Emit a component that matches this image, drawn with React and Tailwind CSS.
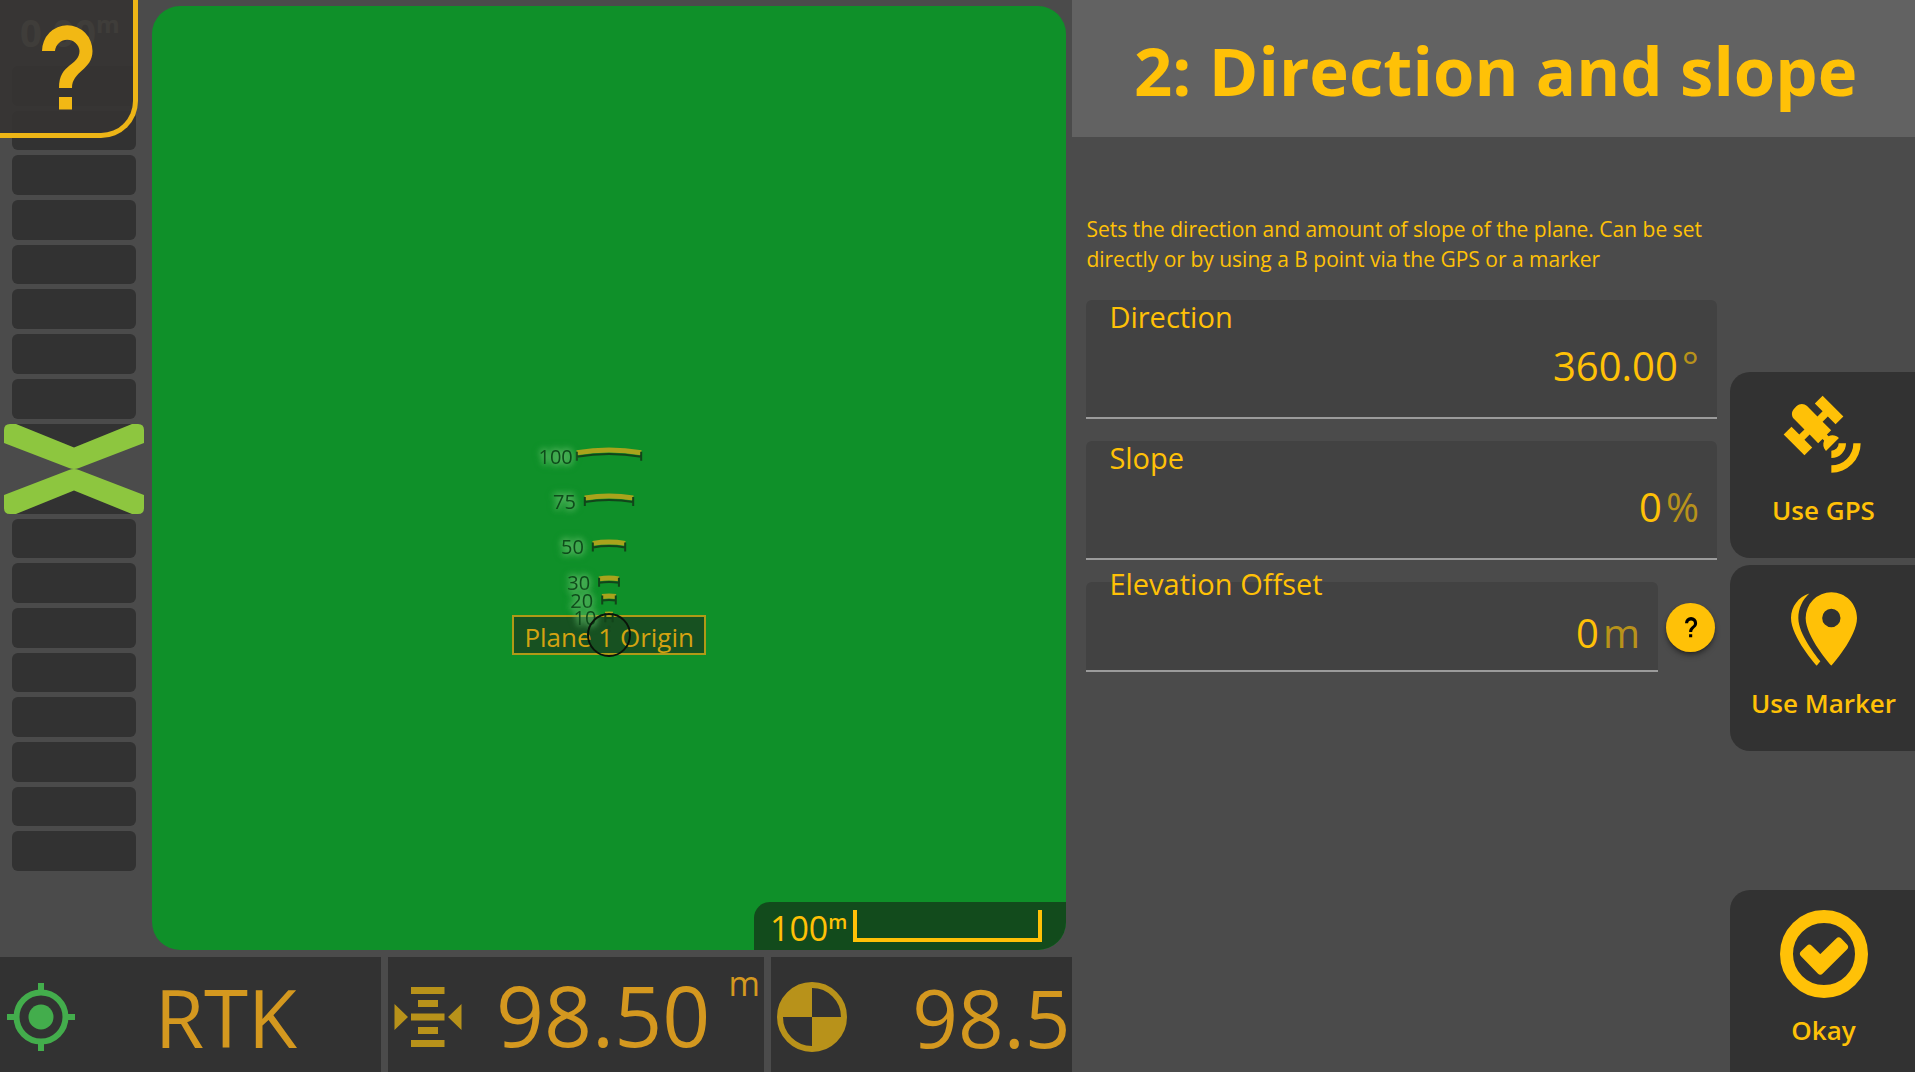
const HELP_PATH =
  "M25 34A25 25.500 0 0 1 75.500 34C75.500 53 55 54 55 71H42C42 46 62.500 49 62.500 34A12.300 12.300 0 0 0 38 34ZM42 80H55V92.500H42Z";

function HelpGlyph({ className }) {
  return (
    <svg viewBox="0 0 100 100" className={className} fill="currentColor" aria-hidden="true">
      <path d={HELP_PATH} />
    </svg>
  );
}

function SatelliteIcon() {
  return (
    <svg viewBox="0 0 24 24" className="size-22" fill="currentColor" aria-hidden="true">
      <path d="M11.62,1L17.28,6.67L15.16,8.79L13.04,6.67L11.62,8.09L13.95,10.41L12.79,11.58L13.24,12.04C14.17,11.61 15.31,11.77 16.07,12.54L12.54,16.07C11.77,15.31 11.61,14.17 12.04,13.24L11.58,12.79L10.41,13.95L8.09,11.62L6.67,13.04L8.79,15.16L6.67,17.28L1,11.62L3.14,9.5L5.26,11.62L6.67,10.21L3.84,7.38C3.06,6.6 3.06,5.33 3.84,4.55L4.55,3.84C5.33,3.06 6.6,3.06 7.38,3.84L10.21,6.67L11.62,5.26L9.5,3.14L11.62,1M18,14A4,4 0 0,1 14,18V16A2,2 0 0,0 16,14H18M22,14A8,8 0 0,1 14,22V20A6,6 0 0,0 20,14H22Z" />
    </svg>
  );
}

function MarkerIcon() {
  return (
    <svg viewBox="0 0 24 24" className="size-22" fill="currentColor" aria-hidden="true">
      <path d="M14,11.5A2.5,2.5 0 0,0 16.5,9A2.5,2.5 0 0,0 14,6.5A2.5,2.5 0 0,0 11.5,9A2.5,2.5 0 0,0 14,11.5M14,2C17.86,2 21,5.13 21,9C21,14.25 14,22 14,22C14,22 7,14.25 7,9A7,7 0 0,1 14,2M5,9C5,13.5 10.08,19.66 11,20.81L10,22C10,22 3,14.25 3,9C3,5.83 5.11,3.15 8,2.29C6.16,3.94 5,6.33 5,9Z" />
    </svg>
  );
}

function OkayIcon() {
  return (
    <svg viewBox="0 0 88 88" className="size-22" aria-hidden="true">
      <circle cx="44" cy="44" r="37.5" fill="none" stroke="currentColor" strokeWidth="13" />
      <path
        d="M23.500 43.700L29.300 38.200L40.300 49L58.700 31L64.500 37L40.300 61Z"
        fill="currentColor"
        stroke="currentColor"
        strokeWidth="7"
        strokeLinejoin="round"
      />
    </svg>
  );
}

function TargetIcon() {
  return (
    <svg viewBox="0 0 68 68" className="size-17 shrink-0 text-[#43ad4c]" aria-hidden="true">
      <circle cx="34" cy="34" r="24.5" fill="none" stroke="currentColor" strokeWidth="6" />
      <circle cx="34" cy="34" r="12.5" fill="currentColor" />
      <path d="M34 0V9M34 59V68M0 34H9M59 34H68" stroke="currentColor" strokeWidth="6" />
    </svg>
  );
}

function LevelIcon() {
  return (
    <svg viewBox="0 0 68 68" className="size-17 shrink-0" fill="#b8921a" aria-hidden="true">
      <path d="M17 4H50.500V11H17ZM24 17H44V24H24ZM17 30.500H50.500V37.500H17ZM24 44H44V51H24ZM17 57H50.500V64H17Z" />
      <path d="M0.500 21V47L14 34ZM67.500 21V47L54 34Z" />
    </svg>
  );
}

function QuadrantIcon() {
  return (
    <svg viewBox="0 0 70 70" className="size-[70px] shrink-0" aria-hidden="true">
      <circle cx="35" cy="35" r="32" fill="none" stroke="#b8921a" strokeWidth="6" />
      <path d="M35 35V3A32 32 0 0 0 3 35ZM35 35V67A32 32 0 0 0 67 35Z" fill="#b8921a" />
    </svg>
  );
}

function LevelIndicator() {
  return (
    <svg viewBox="0 0 140 90" className="h-[90px] w-full shrink-0" role="img" aria-label="On grade">
      <path d="M10 0H130L70 25ZM10 90H130L70 65Z" fill="#323232" />
      <path
        d="M12 0L70 23.500L128 0H134Q140 0 140 6V19L75 44Q70 46 65 44L0 19V6Q0 0 6 0ZM12 90L70 66.500L128 90H134Q140 90 140 84V71L75 46Q70 44 65 46L0 71V84Q0 90 6 90Z"
        fill="#8dc63f"
      />
    </svg>
  );
}

const BARS = [0, 1, 2, 3, 4, 5, 6, 7];

function GradeBars() {
  return BARS.map((n) => <div key={n} className="mx-2 flex-1 rounded-md bg-[#323232]" />);
}

const RANGES = [
  { metres: 100, r: 185, gap: 4 },
  { metres: 75, r: 139, gap: 9 },
  { metres: 50, r: 93, gap: 9 },
  { metres: 30, r: 57, gap: 9 },
  { metres: 20, r: 39, gap: 9 },
  { metres: 10, r: 21, gap: 9 },
];

function RangeArc({ metres, r, gap }) {
  const dx = r * 0.174;
  const y = -r * 0.985;
  return (
    <g>
      <path d={`M${-dx} ${y}A${r} ${r} 0 0 1 ${dx} ${y}`} fill="none" stroke="#a9a31c" strokeWidth="5" />
      <path
        d={`M${-dx} ${y + 8}V${y - 1}M${dx} ${y + 8}V${y - 1}M${-dx} ${y + 4}A${r} ${r} 0 0 1 ${dx} ${y + 4}`}
        fill="none"
        stroke="#12441a"
        strokeWidth="2"
      />
      <text
        x={-dx - gap}
        y={y + 11}
        textAnchor="end"
        fontSize="20"
        fill="#0f4a1b"
        style={{ filter: "drop-shadow(0 0 3px #6cc070) drop-shadow(0 0 3px #5cba65)" }}
      >
        {metres}
      </text>
    </g>
  );
}

function MapView() {
  return (
    <main className="relative flex-1 overflow-hidden rounded-[28px] bg-[#0f9029]">
      <div className="absolute top-2/3 left-1/2 size-0">
        <svg viewBox="-24 -24 48 48" className="absolute -top-6 -left-6 size-12" aria-hidden="true">
          <path d="M0 -10V-2M-2 -8H2M-2 -4H2M0 17V22" stroke="#12441a" strokeWidth="1" />
        </svg>
        <div className="absolute -top-5 -left-[97px] flex h-10 w-[194px] items-center justify-center border-2 border-[#b09a16] bg-[#184a20]/90 pt-1 text-[26px] whitespace-nowrap text-[#d3a311]">
          Plane 1 Origin
        </div>
        <svg viewBox="-100 -220 200 260" className="absolute -top-[220px] -left-[100px] h-[260px] w-[200px]">
          {RANGES.map((range) => (
            <RangeArc key={range.metres} {...range} />
          ))}
          <circle r="21" fill="none" stroke="#0a140a" strokeWidth="2" />
        </svg>
      </div>
      <div className="absolute right-0 bottom-0 flex h-12 items-start rounded-tl-2xl bg-[#124b1c] pt-2 pr-6 pl-4 text-[#ffc107]">
        <span className="text-[34px] leading-9">100</span>
        <span className="text-xl leading-6 font-semibold">m</span>
        <div className="ml-1.5 h-8 w-[189px] border-x-4 border-b-4 border-[#ffc107]" />
      </div>
    </main>
  );
}

function StatusBar() {
  return (
    <footer className="flex h-[115px] gap-[7px] text-[#d4981f]">
      <div className="flex w-[35.5%] items-center bg-[#323232] pt-1 pl-[7px]">
        <TargetIcon />
        <span className="flex-1 pr-1 text-center text-[80px] leading-none">RTK</span>
      </div>
      <div className="flex w-[35.1%] items-center bg-[#323232] pt-1 pr-1 pl-1.5">
        <LevelIcon />
        <span className="flex-1 pb-1 pl-4 text-center text-[84px] leading-none">98.50</span>
        <span className="self-start pt-0.5 text-[34px] leading-10">m</span>
      </div>
      <div className="flex flex-1 items-center justify-between overflow-hidden bg-[#323232] pt-1 pr-0.5 pl-1.5">
        <QuadrantIcon />
        <span className="text-[80px] leading-none">98.5</span>
      </div>
    </footer>
  );
}

function Field({ id, label, value, unit, compact }) {
  return (
    <div
      className={
        compact
          ? "flex-1 rounded-t-md border-b-2 border-[#9b9b9b] bg-[#424242] pb-3"
          : "rounded-t-md border-b-2 border-[#9b9b9b] bg-[#424242] pt-px pb-[26px]"
      }
    >
      <label
        htmlFor={id}
        className={compact ? "-mt-3.5 block pl-[23px] text-[29px] leading-8" : "block pl-[23px] text-[29px] leading-8"}
      >
        {label}
      </label>
      <div className="mt-2 flex gap-1 pr-[18px] text-[40px] leading-[50px]">
        <input
          id={id}
          type="text"
          defaultValue={value}
          className="h-[50px] min-w-0 flex-1 bg-transparent text-right outline-none"
        />
        <span className="text-[#b8921a]">{unit}</span>
      </div>
    </div>
  );
}

function ActionButton({ icon, label, last }) {
  return (
    <button
      type="button"
      className={
        last
          ? "mt-auto flex h-[182px] flex-col items-center gap-3.5 rounded-tl-[20px] bg-[#323232] pt-5 pl-0.5 text-[26px] leading-9 font-semibold"
          : "flex h-[186px] flex-col items-center gap-3 rounded-l-[20px] bg-[#323232] pt-5 pl-0.5 text-[26px] leading-9 font-semibold"
      }
    >
      {icon}
      {label}
    </button>
  );
}

export default function App() {
  return (
    <div className="flex h-screen overflow-hidden bg-[#4b4b4b] font-['Open_Sans',sans-serif]">
      <div className="flex w-[56%] flex-col">
        <div className="flex min-h-0 flex-1 pt-1.5 pr-1.5 pb-[7px]">
          <aside className="relative -my-1.5 flex w-[152px] flex-col gap-[5px] pt-[66px] pr-2 pb-[85px] pl-1">
            <div className="absolute top-1 left-5 flex text-[#9d9c82]">
              <span className="text-[38px] font-bold">0.00</span>
              <span className="pt-1 text-2xl font-bold">m</span>
            </div>
            <GradeBars />
            <LevelIndicator />
            <GradeBars />
            <button
              type="button"
              aria-label="Help"
              className="absolute top-0 left-0 flex size-[138px] items-center justify-center rounded-br-[37px] border-r-[5px] border-b-[5px] border-[#edb516] bg-[#353332]/90 text-[#f2b814]"
            >
              <HelpGlyph className="size-[100px]" />
            </button>
          </aside>
          <MapView />
        </div>
        <StatusBar />
      </div>

      <section className="flex flex-1 flex-col text-[#ffc107]">
        <header className="flex h-[137px] items-center justify-center bg-[#626262] pt-1 pl-1">
          <h1 className="text-[67px] leading-none font-bold whitespace-nowrap">2: Direction and slope</h1>
        </header>
        <div className="flex flex-1">
          <form className="flex flex-1 flex-col gap-[22px] pt-[77px] pr-[13px] pl-[14px]">
            <p className="mb-1 text-[21px] leading-[30px] whitespace-nowrap">
              Sets the direction and amount of slope of the plane. Can be set
              <br />
              directly or by using a B point via the GPS or a marker
            </p>
            <Field id="direction" label="Direction" value="360.00" unit="°" />
            <Field id="slope" label="Slope" value="0" unit="%" />
            <div className="flex items-center gap-2">
              <Field id="elevation" label="Elevation Offset" value="0" unit="m" compact />
              <button
                type="button"
                aria-label="About elevation offset"
                className="mr-0.5 flex size-[49px] items-center justify-center rounded-full bg-[#ffc107] text-black shadow-md shadow-black/40"
              >
                <HelpGlyph className="size-6" />
              </button>
            </div>
          </form>
          <aside className="flex w-[185px] flex-col gap-[7px] pt-[235px]">
            <ActionButton icon={<SatelliteIcon />} label="Use GPS" />
            <ActionButton icon={<MarkerIcon />} label="Use Marker" />
            <ActionButton icon={<OkayIcon />} label="Okay" last />
          </aside>
        </div>
      </section>
    </div>
  );
}
